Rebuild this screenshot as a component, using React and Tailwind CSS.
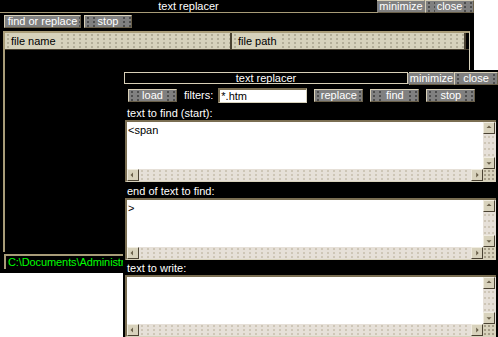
const FONT = "font-['Liberation_Sans',Arial,sans-serif]"

function Btn({ label, className = "" }) {
  return (
    <div
      className={`h-[13px] flex items-center justify-center bg-[#808080] bg-[radial-gradient(circle,#4a4a4a_0.7px,transparent_0.9px)] bg-size-[6px_4px] border border-t-[#d8d0b8] border-l-[#d8d0b8] border-r-[#6a604a] border-b-[#6a604a] text-white text-[11px] leading-none ${className}`}
    >
      <span className="bg-[#808080] px-[2px]">{label}</span>
    </div>
  )
}

function ArrowBtn({ dir }) {
  const pts = {
    up: "3,6 6,3 9,6",
    down: "3,5 6,8 9,5",
    left: "6,3 3,6 6,9",
    right: "5,3 8,6 5,9",
  }
  return (
    <div className="w-[12px] h-[12px] bg-[#d8d2bc] border border-t-[#f0ece0] border-l-[#f0ece0] border-r-[#4a4232] border-b-[#4a4232] shrink-0 flex items-center justify-center">
      <svg width="10" height="10" viewBox="0 0 12 12">
        <polygon points={pts[dir]} fill="#6a604a" />
      </svg>
    </div>
  )
}

function TextBox({ value }) {
  return (
    <div className="mx-[2px] h-[62px] border-t-2 border-l-2 border-[#7a6e52] border-b border-b-[#d8d2bc] flex flex-col bg-white">
      <div className="flex flex-1 min-h-0">
        <div className="flex-1 px-[1px] pt-[2px] text-black text-[11px] leading-tight">{value}</div>
        <div className="w-[13px] bg-[#e6e0d8] bg-[radial-gradient(circle,#b0a890_0.6px,transparent_0.8px)] bg-size-[4px_6px] flex flex-col justify-between">
          <ArrowBtn dir="up" />
          <ArrowBtn dir="down" />
        </div>
      </div>
      <div className="h-[12px] flex bg-[#e6e0d8] bg-[radial-gradient(circle,#b0a890_0.6px,transparent_0.8px)] bg-size-[6px_4px]">
        <ArrowBtn dir="left" />
        <div className="flex-1" />
        <ArrowBtn dir="right" />
        <div className="w-[13px] bg-[#d8d2bc] bg-[radial-gradient(circle,#6a604a_0.6px,transparent_0.8px)] bg-size-[4px_4px]" />
      </div>
    </div>
  )
}

export default function App() {
  return (
    <div className={`relative w-[498px] h-[337px] bg-white overflow-hidden ${FONT}`}>
      {/* back window */}
      <div className="absolute left-0 top-0 w-[474px] h-[273px] bg-black flex flex-col">
        <div className="h-[13px] flex border-b border-[#a89c78]">
          <div className="flex-1 text-center text-white text-[11px] leading-[12px]">text replacer</div>
          <Btn label="minimize" className="w-[48px] h-[12px]" />
          <Btn label="close" className="w-[49px] h-[12px]" />
        </div>
        <div className="flex gap-[3px] pl-[4px] pt-[2px]">
          <Btn label="find or replace" className="w-[77px]" />
          <Btn label="stop" className="w-[48px]" />
        </div>
        <div className="ml-[3px] mt-[3px] w-[467px] h-[221px] border-t-2 border-l-2 border-[#a89c78] border-r border-r-[#d8d2bc] flex flex-col">
          <div className="h-[17px] flex border-b border-[#4a4232] text-black text-[11px]">
            <div className="w-[227px] bg-[#d6d2bc] bg-[radial-gradient(circle,#8a8470_0.6px,transparent_0.8px)] bg-size-[6px_4px] border-r-2 border-[#4a4232] flex items-center pl-[6px]">
              <span className="bg-[#d6d2bc] pr-1">file name</span>
            </div>
            <div className="w-[234px] bg-[#d6d2bc] bg-[radial-gradient(circle,#8a8470_0.6px,transparent_0.8px)] bg-size-[6px_4px] border-r-2 border-[#4a4232] flex items-center pl-[6px]">
              <span className="bg-[#d6d2bc] pr-1">file path</span>
            </div>
          </div>
          <div className="flex-1" />
        </div>
        <div className="ml-[4px] mt-[2px] w-[466px] h-[15px] border-t-2 border-l-2 border-[#a89c78] pl-[2px]">
          <div className="w-[116px] overflow-hidden whitespace-nowrap text-[#00ff00] text-[11px] tracking-[-0.1px] leading-[13px]">
            C:\Documents\Administr
          </div>
        </div>
      </div>

      {/* front window */}
      <div className="absolute left-[123px] top-[70px] w-[375px] h-[267px] bg-black flex flex-col">
        <div className="flex pl-[1px] pt-[2px] h-[16px]">
          <div className="flex-1 h-[12px] border border-[#d8d0b8] text-white text-[11px] leading-[11px] text-center">text replacer</div>
          <Btn label="minimize" className="w-[45px] ml-[1px]" />
          <Btn label="close" className="w-[44px]" />
        </div>
        <div className="flex items-center pl-[5px] pt-[2px] h-[17px]">
          <Btn label="load" className="w-[49px]" />
          <span className="ml-[7px] text-white text-[11px]">filters:</span>
          <div className="ml-[5px] w-[89px] h-[15px] bg-white border-t-2 border-l-2 border-[#7a6e52] border-r border-b border-r-[#d8d2bc] border-b-[#d8d2bc] text-black text-[11px] leading-[12px] pl-[1px]">
            *.htm
          </div>
          <Btn label="replace" className="w-[49px] ml-[7px]" />
          <Btn label="find" className="w-[49px] ml-[7px]" />
          <Btn label="stop" className="w-[49px] ml-[7px]" />
        </div>
        <div className="text-white text-[11px] leading-[12px] pl-[4px] mt-[4px] mb-[1px]">text to find (start):</div>
        <TextBox value="<span" />
        <div className="text-white text-[11px] leading-[12px] pl-[4px] mt-[3px] mb-[1px]">end of text to find:</div>
        <TextBox value=">" />
        <div className="text-white text-[11px] leading-[12px] pl-[4px] mt-[2px] mb-[1px]">text to write:</div>
        <TextBox value="" />
      </div>
    </div>
  )
}
